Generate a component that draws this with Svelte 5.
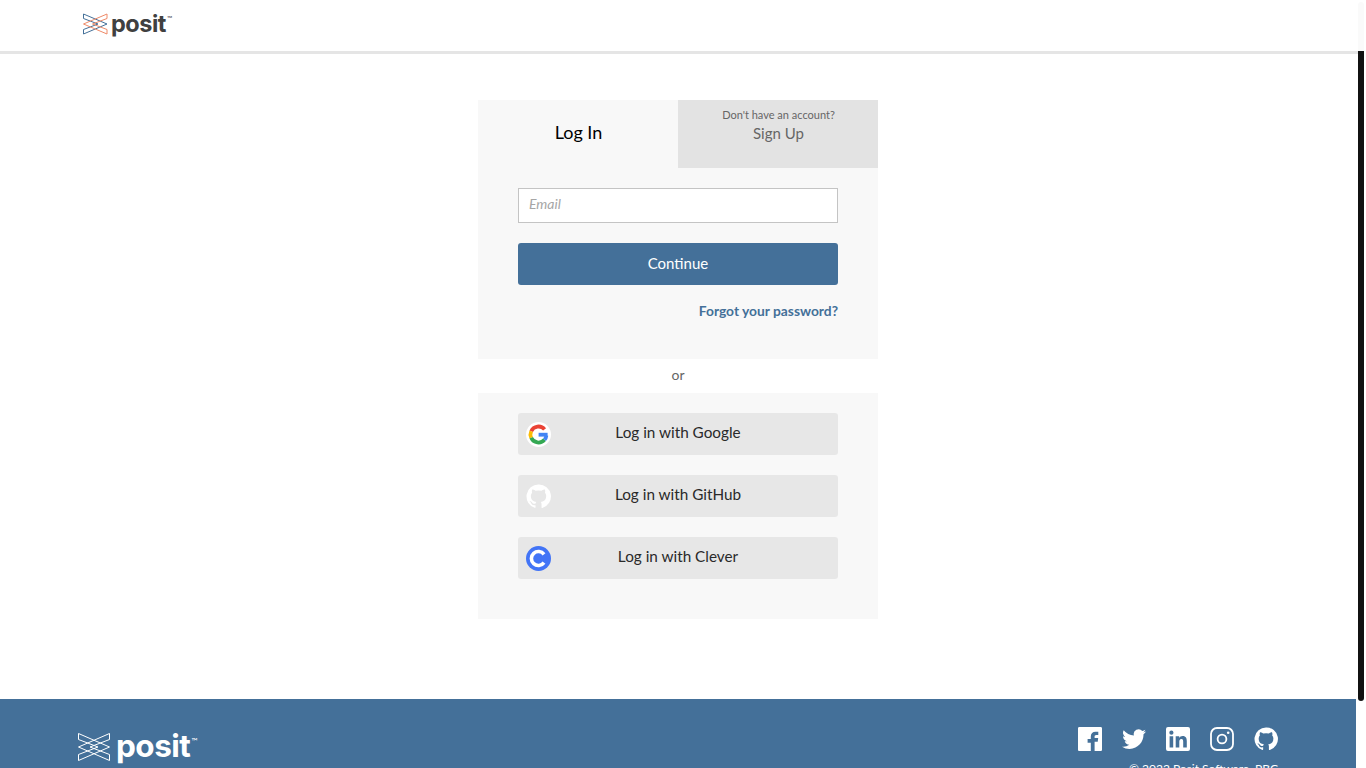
<script lang="ts">
	const providers = [
		{ id: 'google', label: 'Log in with Google' },
		{ id: 'github', label: 'Log in with GitHub' },
		{ id: 'clever', label: 'Log in with Clever' }
	];
	const gh =
		'M12 .5a11.5 11.5 0 0 0-3.640 22.410c.580.100.790-.250.790-.550v-2.030c-3.200.700-3.880-1.370-3.880-1.370-.520-1.330-1.280-1.680-1.280-1.680-1.040-.710.080-.700.080-.700 1.160.080 1.770 1.190 1.770 1.190 1.030 1.760 2.700 1.250 3.360.960.100-.750.400-1.250.730-1.540-2.550-.290-5.240-1.280-5.240-5.680 0-1.250.450-2.280 1.180-3.080-.120-.290-.510-1.460.110-3.040 0 0 .970-.310 3.170 1.180a11 11 0 0 1 5.770 0c2.200-1.490 3.170-1.180 3.170-1.180.620 1.580.230 2.750.110 3.040.740.800 1.180 1.830 1.180 3.080 0 4.410-2.690 5.380-5.250 5.670.410.360.780 1.060.780 2.130v3.160c0 .310.210.660.800.550A11.500 11.500 0 0 0 12 .5z';
</script>

<div class="page">
	<header class="top">
		<a class="brand" href="#top">
			<svg class="mark" width="25" height="22" viewBox="0 0 25 22" fill="none" stroke-width="1">
				<path d="M.5 1v4.500L15 11 .5 16.500V21L24 11z" stroke="#447099" />
				<path d="M24 1v4.500L9.500 11 24 16.500V21L.5 11z" stroke="#ee8a68" />
			</svg>
			<span class="word">posit</span><span class="tm">™</span>
		</a>
	</header>

	<main class="main">
		<section class="card">
			<div class="tabs">
				<div class="tab active">Log In</div>
				<div class="tab other">
					<small>Don't have an account?</small>
					<span>Sign Up</span>
				</div>
			</div>
			<form class="panel login">
				<input type="text" placeholder="Email" />
				<button class="primary" type="button">Continue</button>
				<a class="forgot" href="#forgot">Forgot your password?</a>
			</form>
			<div class="or">or</div>
			<div class="panel social">
				{#each providers as p}
					<button class="provider" type="button">
						<span class="icon">
							{#if p.id === 'google'}
								<svg width="25" height="25" viewBox="0 0 25 25" fill="none" stroke-width="3.800">
									<circle cx="12.500" cy="12.500" r="12.500" fill="#fff" />
									<path d="M5.200 9.200A8 8 0 0 1 18.600 7.400" stroke="#ea4335" />
									<path d="M5.200 9.200A8 8 0 0 0 5.200 15.800" stroke="#fbbc05" />
									<path d="M5.200 15.800A8 8 0 0 0 18.500 17.800" stroke="#34a853" />
									<path d="M18.500 17.800A8 8 0 0 0 20.400 13.500" stroke="#4285f4" />
									<rect x="12.600" y="10.800" width="9" height="3.800" fill="#4285f4" />
								</svg>
							{:else if p.id === 'github'}
								<svg width="25" height="25" viewBox="0 0 24 24"><path d={gh} fill="#fff" /></svg>
							{:else}
								<svg width="25" height="25" viewBox="0 0 25 25">
									<circle cx="12.500" cy="12.500" r="12.500" fill="#4274f6" />
									<path d="M18 16.700a7 7 0 1 1 0-8.400" fill="none" stroke="#fff" stroke-width="3.600" />
								</svg>
							{/if}
						</span>
						{p.label}
					</button>
				{/each}
			</div>
		</section>
	</main>

	<footer class="foot">
		<div class="foot-brand">
			<svg width="32" height="28" viewBox="0 0 32 28" fill="none" stroke="#fff" stroke-width="1">
				<path d="M.5 .5v6L20 14 .5 21.500v6L31.500 14z" />
				<path d="M31.500 .5v6L12 14l19.500 7.500v6L.5 14z" />
			</svg>
			<span class="word">posit</span><span class="tm">™</span>
		</div>
		<div class="foot-right">
			<div class="socials">
				<svg width="24" height="24" viewBox="0 0 24 24"><path d="M1.300 0h21.400C23.400 0 24 .6 24 1.300v21.400c0 .7-.6 1.300-1.300 1.300h-6.100v-9.300h3.100l.5-3.600h-3.600V9.800c0-1 .3-1.800 1.800-1.800h1.900V4.800c-.3 0-1.500-.1-2.800-.1-2.800 0-4.700 1.700-4.700 4.800v2.600H9.600v3.600h3.200V24H1.300C.6 24 0 23.400 0 22.700V1.300C0 .6.600 0 1.300 0z" fill="#fff" /></svg>
				<svg width="24" height="24" viewBox="0 0 24 24"><path d="M24 4.600c-.9.400-1.800.7-2.800.8a5 5 0 0 0 2.200-2.700c-1 .6-2 1-3.100 1.200a4.900 4.900 0 0 0-8.400 4.500A14 14 0 0 1 1.700 3.200a4.900 4.900 0 0 0 1.500 6.600c-.8 0-1.600-.2-2.200-.6 0 2.400 1.700 4.500 3.900 5-.7.200-1.500.2-2.200.1a4.900 4.900 0 0 0 4.600 3.400A9.900 9.900 0 0 1 0 19.700a14 14 0 0 0 7.500 2.200c9.100 0 14.300-7.700 14-14.600 1-.7 1.800-1.600 2.500-2.700z" fill="#fff" /></svg>
				<svg width="24" height="24" viewBox="0 0 24 24"><path fill-rule="evenodd" d="M2 0h20a2 2 0 0 1 2 2v20a2 2 0 0 1-2 2H2a2 2 0 0 1-2-2V2a2 2 0 0 1 2-2zm1.600 9.200v11.200h3.600V9.200zM5.400 3.600a2.100 2.100 0 1 0 0 4.200 2.100 2.100 0 0 0 0-4.200zm4.300 5.600v11.200h3.600v-5.600c0-1.500.3-2.900 2.100-2.900s1.800 1.700 1.800 3v5.500h3.600v-6.200c0-3-.7-5.300-4.200-5.300-1.700 0-2.800.9-3.300 1.800h-.1V9.200z" fill="#fff" /></svg>
				<svg width="24" height="24" viewBox="0 0 24 24" fill="none" stroke="#fff"><rect x="1" y="1" width="22" height="22" rx="6" stroke-width="1.800" /><circle cx="12" cy="12" r="4.400" stroke-width="1.800" /><circle cx="18.200" cy="5.800" r="1.300" fill="#fff" stroke="none" /></svg>
				<svg width="24" height="24" viewBox="0 0 24 24"><path d={gh} fill="#fff" /></svg>
			</div>
			<div class="copy">© 2022 Posit Software, PBC</div>
		</div>
	</footer>

	<div class="scroll-track"></div>
	<div class="scroll-thumb"></div>
</div>

<style>
	:global(body) {
		margin: 0;
		background: #fff;
		overflow: hidden;
	}

	.page {
		position: relative;
		width: 1366px;
		height: 768px;
		overflow: hidden;
		font-family: Lato, 'Liberation Sans', sans-serif;
		color: #222;
	}

	.top {
		width: 1358px;
		height: 54px;
		box-sizing: border-box;
		border-bottom: 3px solid #e5e5e5;
		padding-left: 83px;
		display: flex;
	}

	.brand {
		display: flex;
		align-items: center;
		height: 47px;
		text-decoration: none;
		color: #404040;
	}

	.mark {
		margin-right: 3px;
	}

	.word {
		font-family: Inter, Lato, sans-serif;
		font-weight: 700;
		letter-spacing: -0.5px;
	}

	.brand .word {
		font-size: 23.500px;
		line-height: 24px;
	}

	.tm {
		font-size: 7px;
		align-self: flex-start;
	}

	.brand .tm {
		margin-top: 14px;
		margin-left: 1px;
	}

	.main {
		width: 1356px;
		height: 645px;
		padding-top: 46px;
		padding-left: 478px;
		box-sizing: border-box;
	}

	.card {
		width: 400px;
	}

	.tabs {
		display: flex;
		height: 68px;
	}

	.tab {
		flex: 1;
		display: flex;
		flex-direction: column;
		align-items: center;
		box-sizing: border-box;
	}

	.active {
		background: #f8f8f8;
		color: #000;
		font-size: 18px;
		justify-content: center;
		padding: 0 0 5px 1px;
	}

	.other {
		background: #e3e3e3;
		color: #666;
		font-size: 15px;
		padding: 7px 0 0 1px;
	}

	.other small {
		font-size: 11px;
		line-height: 15px;
		margin-bottom: 2px;
	}

	.panel {
		background: #f8f8f8;
		display: flex;
		flex-direction: column;
		padding: 20px 40px;
	}

	.login {
		height: 191px;
		box-sizing: border-box;
	}

	input {
		height: 35px;
		box-sizing: border-box;
		border: 1px solid #c4c4c4;
		background: #fff;
		padding: 0 10px 5px;
		font: italic 14px Lato, sans-serif;
		margin: 0;
		outline: none;
	}

	input::placeholder {
		color: #a6a6a6;
		opacity: 1;
	}

	button {
		border: none;
		border-radius: 3px;
		font-family: inherit;
		font-size: 15.300px;
		height: 42px;
		padding: 0 0 5px;
		margin: 20px 0 0;
		cursor: pointer;
	}

	.primary {
		background: #447099;
		color: #fff;
		font-size: 15px;
		padding-bottom: 3px;
	}

	.forgot {
		align-self: flex-end;
		margin-top: 17px;
		font-size: 13.800px;
		font-weight: 700;
		color: #447099;
		text-decoration: none;
	}

	.or {
		height: 34px;
		line-height: 32px;
		text-align: center;
		font-size: 14px;
		color: #666;
	}

	.social {
		padding-bottom: 40px;
	}

	.provider {
		position: relative;
		background: #e7e7e7;
		color: #2a2a2a;
	}

	.provider:first-child {
		margin-top: 0;
	}

	.icon {
		position: absolute;
		left: 8px;
		top: 9px;
		height: 25px;
	}

	.icon svg {
		display: block;
	}

	.foot {
		width: 1356px;
		height: 69px;
		background: #447099;
		color: #fff;
		display: flex;
		justify-content: space-between;
		padding: 28px 78px 0;
		box-sizing: border-box;
	}

	.foot-brand {
		display: flex;
		align-items: center;
		height: 40px;
	}

	.foot-brand svg {
		margin-right: 6px;
	}

	.foot-brand .word {
		font-size: 31.500px;
		line-height: 32px;
		margin-top: -2px;
	}

	.foot-brand .tm {
		margin-top: 9px;
		margin-left: 1px;
		font-size: 8px;
	}

	.foot-right {
		display: flex;
		flex-direction: column;
		align-items: flex-end;
	}

	.socials {
		display: flex;
		gap: 20px;
	}

	.copy {
		font-size: 12px;
		line-height: 16px;
		margin-top: 10px;
		white-space: nowrap;
	}

	.scroll-track {
		position: absolute;
		top: 2px;
		left: 1358px;
		width: 6px;
		height: 49px;
		background: #fafafa;
		border-radius: 3px 3px 0 0;
	}

	.scroll-thumb {
		position: absolute;
		top: 51px;
		left: 1358px;
		width: 6px;
		height: 650px;
		background: #111;
		border-radius: 0 0 3px 3px;
	}
</style>
